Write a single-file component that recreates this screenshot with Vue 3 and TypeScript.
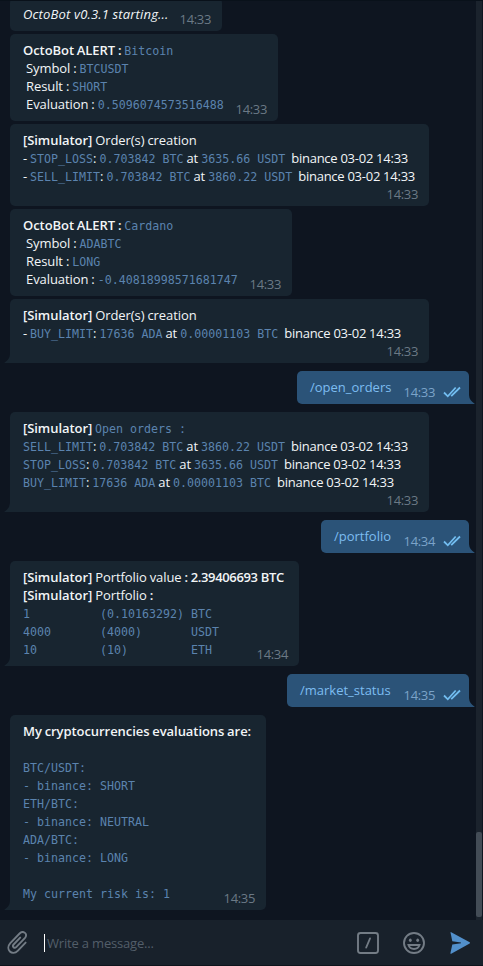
<script setup lang="ts">
type Kind = 'text' | 'bold' | 'amount' | 'date' | 'code' | 'italic' | 'link'
type Run = [Kind, string]
interface Message {
  out?: boolean
  tail?: boolean
  stamp?: boolean
  width: number
  time: string
  lines: Run[][]
}

const t = (s: string): Run => ['text', s]
const b = (s: string): Run => ['bold', s]
const c = (s: string): Run => ['code', s]
const d = (s: string): Run => ['date', s]

const messages: Message[] = [
  { width: 212, time: '14:33', lines: [[['italic', 'OctoBot v0.3.1 starting...']]] },
  {
    width: 268, time: '14:33',
    lines: [
      [b('OctoBot ALERT : '), c('Bitcoin')],
      [t(' Symbol : '), c('BTCUSDT')],
      [t(' Result : '), c('SHORT')],
      [t(' Evaluation : '), c('0.5096074573516488')],
    ],
  },
  {
    width: 419, time: '14:33', stamp: true,
    lines: [
      [b('[Simulator]'), t(' Order(s) creation')],
      [t('- '), c('STOP_LOSS'), t(': '), c('0.703842 BTC'), t(' at '), c('3635.66 USDT'), d('  binance 03-02 14:33')],
      [t('- '), c('SELL_LIMIT'), t(': '), c('0.703842 BTC'), t(' at '), c('3860.22 USDT'), d('  binance 03-02 14:33')],
    ],
  },
  {
    width: 282, time: '14:33',
    lines: [
      [b('OctoBot ALERT : '), c('Cardano')],
      [t(' Symbol : '), c('ADABTC')],
      [t(' Result : '), c('LONG')],
      [t(' Evaluation : '), c('-0.40818998571681747')],
    ],
  },
  {
    width: 419, time: '14:33', stamp: true, tail: true,
    lines: [
      [b('[Simulator]'), t(' Order(s) creation')],
      [t('- '), c('BUY_LIMIT'), t(': '), c('17636 ADA'), t(' at '), c('0.00001103 BTC'), d('  binance 03-02 14:33')],
    ],
  },
  { out: true, tail: true, width: 172, time: '14:33', lines: [[['link', '/open_orders']]] },
  {
    width: 419, time: '14:33', stamp: true, tail: true,
    lines: [
      [b('[Simulator] '), c('Open orders :')],
      [c('SELL_LIMIT'), t(': '), c('0.703842 BTC'), t(' at '), c('3860.22 USDT'), d('  binance 03-02 14:33')],
      [c('STOP_LOSS'), t(': '), c('0.703842 BTC'), t(' at '), c('3635.66 USDT'), d('  binance 03-02 14:33')],
      [c('BUY_LIMIT'), t(': '), c('17636 ADA'), t(' at '), c('0.00001103 BTC'), d('  binance 03-02 14:33')],
    ],
  },
  { out: true, tail: true, width: 148, time: '14:34', lines: [[['link', '/portfolio']]] },
  {
    width: 289, time: '14:34', tail: true,
    lines: [
      [b('[Simulator]'), t(' Portfolio value '), ['amount', ': 2.39406693 BTC']],
      [b('[Simulator]'), t(' Portfolio '), b(':')],
      [c('1          (0.10163292) BTC')],
      [c('4000       (4000)       USDT')],
      [c('10         (10)         ETH')],
    ],
  },
  { out: true, tail: true, width: 182, time: '14:35', lines: [[['link', '/market_status']]] },
  {
    width: 256, time: '14:35', tail: true,
    lines: [
      [b('My cryptocurrencies evaluations are:')],
      [],
      [c('BTC/USDT:')],
      [c('- binance: SHORT')],
      [c('ETH/BTC:')],
      [c('- binance: NEUTRAL')],
      [c('ADA/BTC:')],
      [c('- binance: LONG')],
      [],
      [c('My current risk is: 1')],
    ],
  },
]
</script>

<template>
  <div class="window">
    <main class="chat">
      <div class="history">
        <article
          v-for="(m, i) in messages"
          :key="i"
          class="bubble"
          :class="{ out: m.out, tail: m.tail, stamp: m.stamp }"
          :style="{ width: m.width + 'px' }"
        >
          <p v-for="(line, j) in m.lines" :key="j" class="line"><span v-for="(run, k) in line" :key="k" :class="run[0]">{{ run[1] }}</span></p>
          <span class="meta">
            <time>{{ m.time }}</time>
            <svg v-if="m.out" class="ticks" width="18" height="12" viewBox="0 0 18 12">
              <path d="M1 6.5 4.8 10.3 12.7 1.5M8.2 10.2 17 1.5" />
            </svg>
          </span>
          <svg v-if="m.tail" class="beak" width="7" height="9" viewBox="0 0 7 9"><path d="M7 0V9H.8Q0 9 .6 8.4Q5.7 5.500 6 0Z" /></svg>
        </article>
      </div>
      <div class="track"><div class="thumb"></div></div>
    </main>
    <footer class="composer">
      <svg class="clip" width="22" height="24" viewBox="0 0 22 24">
        <path d="M13.2 6.6 6.6 13.500C4.800 15.500 7.400 17.900 9.200 16.100L17.800 7.200C21.600 2.900 16.200-1.100 12.600 2.500L3.300 12.200C-2.300 18.500 5.300 25.400 10.700 19.800L18.600 11.600" />
      </svg>
      <div class="field">Write a message...</div>
      <svg class="icon" width="24" height="24" viewBox="0 0 24 24">
        <rect x="2" y="2" width="20" height="20" rx="2.500" /><path d="M14 7.500 10.200 16.500" />
      </svg>
      <svg class="icon smile" width="24" height="24" viewBox="0 0 24 24">
        <circle cx="12" cy="12" r="10" />
        <ellipse class="fill" cx="8.300" cy="9.300" rx="1.400" ry="1.800" /><ellipse class="fill" cx="15.700" cy="9.300" rx="1.400" ry="1.800" />
        <path d="M6.500 14H17.500C15.800 19.300 8.200 19.300 6.500 14Z" />
      </svg>
      <svg class="send" width="22" height="24" viewBox="0 0 22 24">
        <path d="M1.500 1.600Q1.400.9 2.200 1.200L20.700 11.200Q21.400 11.800 20.700 12.400L2.200 22.700Q1.400 23 1.400 22.200L3.300 13.500 12 12.200V11.400L3.300 10.200Z" />
      </svg>
    </footer>
  </div>
</template>

<style>
body { background: #0e1520; }
</style>

<style scoped>
.window {
  width: 483px;
  height: 966px;
  display: flex;
  flex-direction: column;
  overflow: hidden;
  background: #0e1520;
  font: 13px/18px 'Open Sans', 'Noto Sans', sans-serif;
  color: #f2f5f7;
}
.chat {
  height: 920px;
  box-sizing: border-box;
  display: flex;
  overflow: hidden;
  border-top: 1px solid #09111a;
}
.history {
  flex: 1;
  display: flex;
  flex-direction: column;
  justify-content: flex-end;
  align-items: flex-start;
  gap: 3px;
  padding: 0 7px 10px 10px;
}
.bubble {
  position: relative;
  flex: none;
  box-sizing: border-box;
  padding: 7px 13px 8px;
  border-radius: 5px;
  background: #182530;
}
.stamp { padding-bottom: 21px; }
.tail { margin-bottom: 5px; border-bottom-left-radius: 0; }
.tail:last-child { margin-bottom: 0; }
.out {
  align-self: flex-end;
  background: #2b5378;
  border-radius: 5px 5px 0 5px;
}
.line { margin: 0; height: 18px; white-space: pre; }
.text { letter-spacing: -0.08px; word-spacing: -0.3px; }
.date { letter-spacing: -0.25px; word-spacing: -0.1px; }
.bold, .amount { font-weight: 600; letter-spacing: -0.06px; }
.bold { word-spacing: -0.5px; }
.amount { letter-spacing: -0.35px; }
.italic { font-style: italic; letter-spacing: 0.17px; }
.code {
  font-family: 'DejaVu Sans Mono', monospace;
  font-size: 11.63px;
  color: #5b83ae;
}
.link { color: #7dbdf1; }
.meta {
  position: absolute;
  right: 11px;
  bottom: 3px;
  display: flex;
  align-items: center;
  color: #6b7985;
}
.meta time { letter-spacing: -0.35px; }
.out .meta { right: 8px; gap: 8px; color: #7ba3c9; }
.ticks { fill: none; stroke: #72bdf0; stroke-width: 1.8; }
.beak { position: absolute; left: -6px; bottom: 0; fill: #182530; }
.out .beak { left: auto; right: -6px; fill: #2b5378; transform: scaleX(-1); }
.track {
  width: 6px;
  margin-right: 1px;
  display: flex;
  flex-direction: column;
  justify-content: flex-end;
  background: #1b232d;
}
.thumb { height: 85px; margin-bottom: 3px; border-radius: 2px; background: #434c56; }
.composer {
  height: 46px;
  box-sizing: border-box;
  display: flex;
  align-items: center;
  padding: 0 12px 0 7px;
  border-bottom: 1px solid #0d141c;
  background: #18212b;
}
.clip, .icon { fill: none; stroke: #737c85; stroke-width: 1.9; stroke-linecap: round; }
.field {
  flex: 1;
  margin-left: 15px;
  padding-left: 2px;
  border-left: 1px solid #fff;
  color: #535e69;
  letter-spacing: -0.18px;
}
.smile { margin-left: 22px; }
.fill { fill: #737c85; stroke: none; }
.send { margin-left: 23px; fill: #5290cb; }
</style>
